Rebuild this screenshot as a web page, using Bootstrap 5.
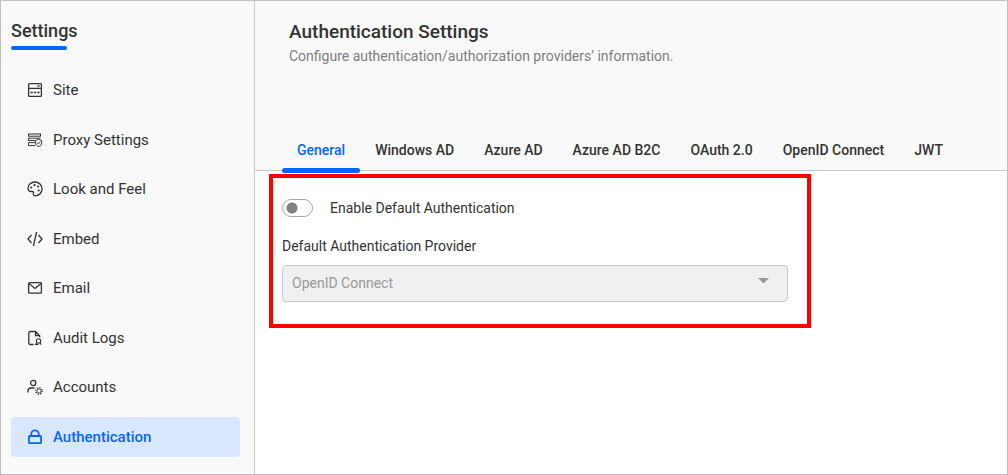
<!DOCTYPE html>
<html lang="en">
<head>
<meta charset="utf-8">
<meta name="viewport" content="width=device-width, initial-scale=1">
<title>Authentication Settings</title>
<link href="https://cdn.jsdelivr.net/npm/bootstrap@5.3.0/dist/css/bootstrap.min.css" rel="stylesheet">
<style>
  :root { --ink: #333; --accent: #0565ff; --line: #c8c8c8; --panel: #f9f9f9; }
  body { font-family: Roboto, "Liberation Sans", sans-serif; font-size: 14px; line-height: 20px; color: var(--ink); background: #fff; }
  .app { border: 1px solid #bfbfbf; }
  .sidebar { width: 254px; background: var(--panel); border-right: 1px solid var(--line); padding: 18px 14px 16px 10px; }
  .sidebar-title, .page-title { font-size: 18px; line-height: 24px; font-weight: 500; margin: 0; }
  .page-title { font-size: 19px; }
  .title-bar { width: 56px; height: 4px; border-radius: 2px; background: var(--accent); margin: 3px 0 20px; }
  .side-nav li { margin-bottom: 9px; }
  .side-nav li:nth-child(odd) { margin-bottom: 10px; }
  .side-nav li:last-child { margin-bottom: 0; }
  .side-link { height: 40px; padding: 0 16px; gap: 10px; border-radius: 4px; font-size: 15px; color: var(--ink); }
  .side-link.active { background: #dae8ff; color: var(--accent); font-weight: 500; }
  .side-link svg { width: 16px; height: 16px; fill: none; stroke: currentColor; stroke-width: 1.3; }
  .page-head { background: var(--panel); border-bottom: 1px solid var(--line); padding-top: 19px; }
  .page-intro { padding: 0 34px; margin-bottom: 64px; }
  .page-intro p { color: #808080; margin: 2px 0 0; }
  .tabs { padding-left: 27px; margin-bottom: -3px; }
  .tabs .nav-link { padding: 10px 15px 8px; font-weight: 500; color: var(--ink); border-bottom: 5px solid transparent; }
  .tabs .nav-link.active { color: var(--accent); }
  .tabs .nav-item { position: relative; }
  .tabs .nav-link.active::after { content: ""; position: absolute; left: 0; right: 0; bottom: 0; height: 5px; border-radius: 3px; background: var(--accent); }
  .callout-box { max-width: 542px; border: 4px solid #f00; margin: 3px 14px 0; padding: 20px 19px 22px 9px; }
  .toggle-row { gap: 17px; margin-bottom: 18px; }
  .provider-label { margin-bottom: 9px; }
  .toggle { appearance: none; width: 31px; height: 18px; margin: 0; border: 1px solid #aaa; border-radius: 9px; background: radial-gradient(circle at 9px 8px, #808080 5px, transparent 6px) #fff; }
  .toggle:checked { border-color: var(--accent); background: radial-gradient(circle at 20px 8px, #fff 5px, transparent 6px) var(--accent); }
  .provider { height: 37px; padding: 0 9px; font-size: 14px; border: 1px solid var(--line); border-radius: 4px; color: #999; background-size: 11px 6px; background-position: right 18px top 12px;
    background-image: url("data:image/svg+xml,%3Csvg xmlns='http://www.w3.org/2000/svg' viewBox='0 0 11 6'%3E%3Cpath d='M0 0h11L5.500 5.500z' fill='%23999'/%3E%3C/svg%3E"); }
  .provider:disabled { background-color: #f0f0f0; color: #999; opacity: 1; }
</style>
</head>
<body>
<div class="app d-flex min-vh-100">
  <aside class="sidebar flex-shrink-0">
    <h2 class="sidebar-title">Settings</h2>
    <div class="title-bar"></div>
    <nav aria-label="Settings">
      <ul class="side-nav list-unstyled m-0">
        <li><a href="#" class="side-link d-flex align-items-center text-decoration-none">
          <svg viewBox="0 0 16 16" aria-hidden="true"><rect x="1.600" y="1.600" width="12.800" height="12.800" rx="1"/><path d="M1.600 6.300h12.800M10.500 4h2"/><path d="M3.500 10.500h9" stroke-dasharray="2.200 1.200"/></svg>Site</a></li>
        <li><a href="#" class="side-link d-flex align-items-center text-decoration-none">
          <svg viewBox="0 0 16 16" aria-hidden="true"><g stroke-width="1"><rect x="1.500" y="2" width="12" height="2.200"/><path d="M13.500 6.200h-12v2.300h7M8 10.600H1.500v3H8"/><path d="M8.600 8.500l3-1.300 3 1.300v2.300c0 1.900-1.100 3-3 3.800-1.900-.8-3-1.900-3-3.800z"/><path d="M10.200 10.800l1.100 1.100 2-2.200"/></g></svg>Proxy Settings</a></li>
        <li><a href="#" class="side-link d-flex align-items-center text-decoration-none">
          <svg viewBox="0 0 16 16" aria-hidden="true"><path d="M8 1C4 1 1 3.700 1 7.200c0 2 1.500 3.300 3.300 3.300h.9c1.200 0 1.600.7 1.200 1.700-.5 1.500.5 2.600 1.900 2.600 3.800 0 6.700-3.100 6.700-6.900C15 4 12 1 8 1z"/><g fill="currentColor" stroke="none"><circle cx="4.300" cy="6.500" r="1.100"/><circle cx="7.500" cy="4.200" r="1.100"/><circle cx="11.200" cy="5.500" r="1.100"/><circle cx="11.600" cy="9.500" r="1.100"/></g></svg>Look and Feel</a></li>
        <li><a href="#" class="side-link d-flex align-items-center text-decoration-none">
          <svg viewBox="0 0 16 16" aria-hidden="true"><path d="M4.500 4L1 8l3.500 4M11.500 4L15 8l-3.500 4M9.600 1L6.400 15"/></svg>Embed</a></li>
        <li><a href="#" class="side-link d-flex align-items-center text-decoration-none">
          <svg viewBox="0 0 16 16" aria-hidden="true"><rect x="1.600" y="2.700" width="12.800" height="10.500" rx="1"/><path d="M2 3.500l6 5 6-5"/></svg>Email</a></li>
        <li><a href="#" class="side-link d-flex align-items-center text-decoration-none">
          <svg viewBox="0 0 16 16" aria-hidden="true"><path d="M6.500 14.500H3.300a1.500 1.500 0 0 1-1.500-1.500V3a1.500 1.500 0 0 1 1.500-1.500h5.200l4.200 4.200v1.500M8.500 1.500v4.200h4.200"/><g stroke-width="1.100"><circle cx="11.500" cy="11" r="2.200"/><path d="M9.800 12.500l-1.300 2h3M13 12.700l1.200 1.900"/></g></svg>Audit Logs</a></li>
        <li><a href="#" class="side-link d-flex align-items-center text-decoration-none">
          <svg viewBox="0 0 16 16" aria-hidden="true"><circle cx="6.200" cy="4" r="2.600"/><path d="M1 13.500v-1.600c0-1.700 1.200-2.900 2.900-2.900h3.600"/><g stroke-width=".8"><circle cx="12" cy="12" r="2.100"/><circle cx="12" cy="12" r="3.200" stroke-width="1.400" stroke-dasharray="1.200 1.313"/></g></svg>Accounts</a></li>
        <li><a href="#" class="side-link active d-flex align-items-center text-decoration-none" aria-current="page">
          <svg viewBox="0 0 16 16" aria-hidden="true"><g stroke-width="1.800"><rect x="1.900" y="7" width="12.200" height="7.200" rx="1"/><path d="M4.300 7V5a3.700 3.700 0 0 1 7.400 0v2"/></g></svg>Authentication</a></li>
      </ul>
    </nav>
  </aside>
  <main class="flex-grow-1">
    <header class="page-head">
      <div class="page-intro">
        <h1 class="page-title">Authentication Settings</h1>
        <p>Configure authentication/authorization providers’ information.</p>
      </div>
      <ul class="nav tabs">
        <li class="nav-item"><a class="nav-link active" aria-current="page" href="#">General</a></li>
        <li class="nav-item"><a class="nav-link" href="#">Windows AD</a></li>
        <li class="nav-item"><a class="nav-link" href="#">Azure AD</a></li>
        <li class="nav-item"><a class="nav-link" href="#">Azure AD B2C</a></li>
        <li class="nav-item"><a class="nav-link" href="#">OAuth 2.0</a></li>
        <li class="nav-item"><a class="nav-link" href="#">OpenID Connect</a></li>
        <li class="nav-item"><a class="nav-link" href="#">JWT</a></li>
      </ul>
    </header>
    <section class="callout-box">
      <div class="toggle-row d-flex align-items-center">
        <input class="toggle" type="checkbox" role="switch" id="enableDefault">
        <label for="enableDefault">Enable Default Authentication</label>
      </div>
      <label class="provider-label d-block" for="provider">Default Authentication Provider</label>
      <select class="form-select provider" id="provider" disabled>
        <option selected>OpenID Connect</option>
      </select>
    </section>
  </main>
</div>
<script src="https://cdn.jsdelivr.net/npm/bootstrap@5.3.0/dist/js/bootstrap.bundle.min.js"></script>
</body>
</html>
